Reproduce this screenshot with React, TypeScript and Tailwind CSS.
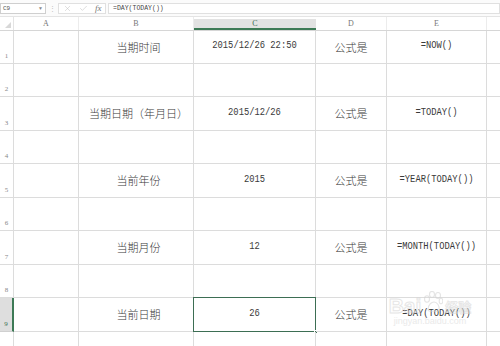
import { X, Check } from 'lucide-react';

const cols = [
  { key: 'A', w: 'w-[65px]' },
  { key: 'B', w: 'w-[115px]' },
  { key: 'C', w: 'w-[122px]' },
  { key: 'D', w: 'w-[71px]' },
  { key: 'E', w: 'w-[100px]' },
];

const rows = [
  { n: 1, h: 'h-[33px]', b: '当期时间', c: '2015/12/26 22:50', e: '=NOW()' },
  { n: 2, h: 'h-[33px]' },
  { n: 3, h: 'h-[34px]', b: '当期日期（年月日）', c: '2015/12/26', e: '=TODAY()' },
  { n: 4, h: 'h-[33px]' },
  { n: 5, h: 'h-[34px]', b: '当前年份', c: '2015', e: '=YEAR(TODAY())' },
  { n: 6, h: 'h-[33px]' },
  { n: 7, h: 'h-[34px]', b: '当期月份', c: '12', e: '=MONTH(TODAY())' },
  { n: 8, h: 'h-[33px]' },
  { n: 9, h: 'h-[34px]', b: '当前日期', c: '26', e: '=DAY(TODAY())' },
  { n: 10, h: 'h-[34px]' },
];

const cjk = "[font-family:'Noto_Sans_CJK_SC',sans-serif]";
const mono = "[font-family:'Liberation_Mono',monospace]";

function Latin({ text }: { text: string }) {
  return <span className={`inline-block scale-y-[1.25] text-[8.8px] ${mono} text-[#3a3a3a]`}>{text}</span>;
}

function Cell({ w, children, selected }: { w: string; children?: React.ReactNode; selected?: boolean }) {
  return (
    <div className={`${w} relative shrink-0 flex items-center justify-center border-r border-b border-[#dcdcdc]`}>
      {children}
      {selected && (
        <>
          <div className="absolute -left-px -top-px -right-px -bottom-px border-[1.5px] border-[#3d6e54]" />
          <div className="absolute -right-[3px] -bottom-[3px] w-[4px] h-[4px] bg-[#3d6e54] border border-white" />
        </>
      )}
    </div>
  );
}

export default function App() {
  return (
    <div className="w-[500px] h-[346px] overflow-hidden bg-white relative text-[#333]">
      {/* formula bar */}
      <div className="h-[17px] flex items-end pb-[2px] border-b border-[#e4e4e4] bg-[#fbfbfb]">
        <div className="w-[46px] h-[11px] border border-[#cfcfcf] bg-white flex items-center justify-between px-[2px]">
          <span className={`text-[6px] ${mono} text-[#555]`}>C9</span>
          <span className="text-[5px] text-[#888]">▼</span>
        </div>
        <span className="w-[12px] text-center text-[7px] leading-[11px] text-[#bbb]">⋮</span>
        <div className="w-[48px] h-[11px] flex items-center justify-around border border-[#e0e0e0] bg-white">
          <X size={9} strokeWidth={1.2} className="text-[#bdbdbd]" />
          <Check size={9} strokeWidth={1.4} className="text-[#bdbdbd]" />
          <span className="text-[9px] leading-[9px] italic text-[#777] [font-family:'Liberation_Serif',serif]">fx</span>
        </div>
        <div className="flex-1 h-[11px] ml-[2px] border border-[#e0e0e0] bg-white flex items-center pl-[4px]">
          <span className={`text-[6.5px] ${mono} text-[#444]`}>=DAY(TODAY())</span>
        </div>
      </div>

      {/* column headers */}
      <div className="flex h-[14px] border-b border-[#d6d6d6]">
        <div className="w-[14px] shrink-0 flex items-end justify-end pr-[2px] pb-[2px] border-r border-[#e4e4e4]">
          <svg width="6" height="6" viewBox="0 0 6 6">
            <path d="M6 0 L6 6 L0 6 Z" fill="#d8d8d8" />
          </svg>
        </div>
        {cols.map((c) => (
          <div
            key={c.key}
            className={`${c.w} shrink-0 flex items-center justify-center text-[8px] [font-family:'Liberation_Serif',serif] ${
              c.key === 'C'
                ? 'bg-[#e2e2e2] border-b-2 border-[#3d7a56] text-[#3d6e54] mt-[2px]'
                : 'text-[#777] border-r border-[#ececec]'
            }`}
          >
            {c.key}
          </div>
        ))}
        <div className="flex-1" />
      </div>

      {/* grid rows */}
      {rows.map((r) => {
        const sel = r.n === 9;
        return (
          <div key={r.n} className={`flex ${r.h}`}>
            <div
              className={`w-[14px] shrink-0 flex items-end justify-center pb-[2px] text-[7px] [font-family:'Liberation_Serif',serif] border-b ${
                sel
                  ? 'bg-[#dedede] text-[#3d6e54] border-r-2 border-r-[#3d7a56] border-b-[#d0d0d0]'
                  : 'text-[#888] border-r border-[#dcdcdc]'
              }`}
            >
              {r.n < 10 ? r.n : ''}
            </div>
            <Cell w="w-[65px]" />
            <Cell w="w-[115px]">
              {r.b && <span className={`text-[11px] font-light ${cjk} text-[#3a3a3a] pl-[5px]`}>{r.b}</span>}
            </Cell>
            <Cell w="w-[122px]" selected={sel}>
              {r.c && <Latin text={r.c} />}
            </Cell>
            <Cell w="w-[71px]">
              {r.b && <span className={`text-[11px] font-light ${cjk} text-[#3a3a3a]`}>公式是</span>}
            </Cell>
            <Cell w="w-[100px]">{r.e && <Latin text={r.e} />}</Cell>
            <div className="flex-1 border-b border-[#dcdcdc]" />
          </div>
        );
      })}

      {/* baidu watermark */}
      <div className="absolute left-[386px] top-[291px] w-[88px] flex flex-col items-center pointer-events-none opacity-60">
        <div className="flex items-end gap-[2px] leading-none">
          <span className="text-[21px] font-bold text-white/50 [-webkit-text-stroke:1px_#d6d6d6] [font-family:'Liberation_Sans',sans-serif]">Bai</span>
          <svg width="20" height="22" viewBox="0 0 20 22" className="mb-[3px]">
            <g fill="none" stroke="#d4d4d4" strokeWidth="1.1">
              <ellipse cx="4" cy="8" rx="2.5" ry="3.2" />
              <ellipse cx="9" cy="3.5" rx="2.5" ry="3" />
              <ellipse cx="15" cy="4.5" rx="2.5" ry="3" />
              <ellipse cx="18" cy="10" rx="1.8" ry="2.8" />
              <path d="M5 19 C5 13 9 11 11 11 C14 11 17 15 16 19 C15 21 12 20 10.5 20 C9 20 6 21 5 19 Z" />
            </g>
          </svg>
          <span className={`text-[13px] font-bold text-white/50 [-webkit-text-stroke:0.8px_#d4d4d4] ${cjk} mb-[3px]`}>经验</span>
        </div>
        <span className="text-[9px] text-[#dcdcdc] [font-family:'Liberation_Sans',sans-serif] leading-none mt-[1px]">jingyan.baidu.com</span>
      </div>
    </div>
  );
}
